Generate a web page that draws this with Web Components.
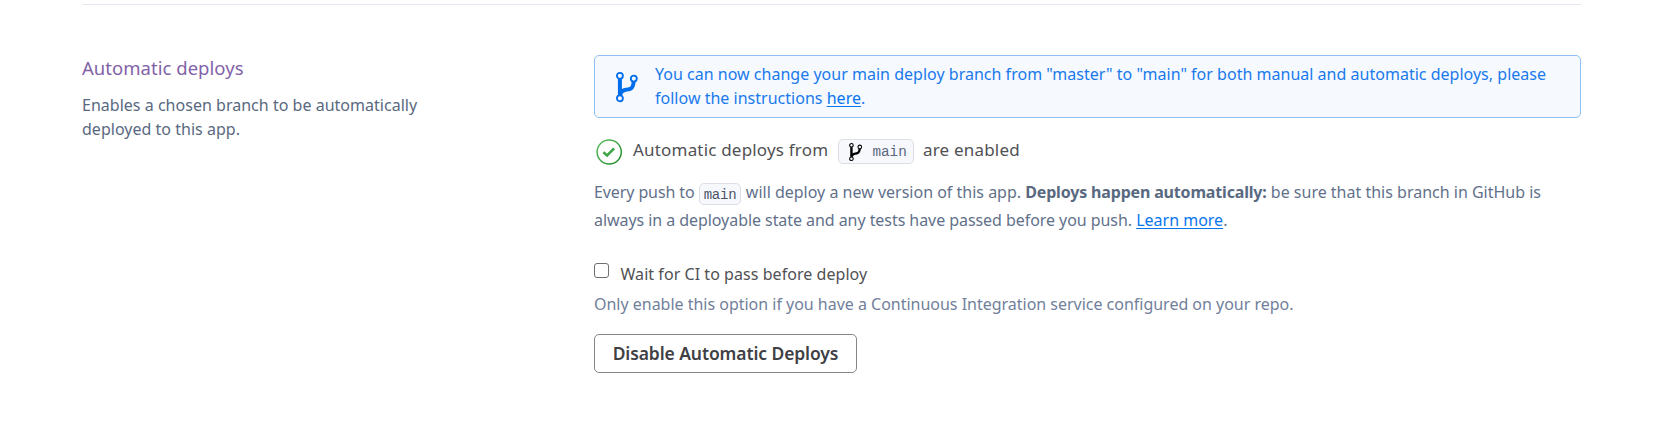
<!DOCTYPE html>
<html lang="en">
<head>
<meta charset="utf-8">
<title>Automatic deploys</title>
<style>
  body { margin: 0; background: #fff; font-family: "Noto Sans", sans-serif; font-size: 16px; line-height: 24px; color: #62718b; }
</style>
</head>
<body>
<deploy-settings></deploy-settings>
<script>
const define = (name, html) => {
  const template = document.createElement('template');
  template.innerHTML = html;
  customElements.define(name, class extends HTMLElement {
    constructor() {
      super();
      this.attachShadow({ mode: 'open' }).append(template.content.cloneNode(true));
    }
  });
};

define('branch-icon', `
  <style>
    :host { display: block; flex: none; width: 22px; height: 30px; }
    svg { display: block; width: 100%; height: 100%; overflow: visible; }
  </style>
  <svg viewBox="0 0 22 30" fill="none" stroke="currentColor">
    <circle cx="3.9" cy="3.8" r="3" stroke-width="1.8"/>
    <circle cx="17.8" cy="6.6" r="3" stroke-width="1.8"/>
    <circle cx="3.9" cy="26.3" r="3" stroke-width="1.8"/>
    <path d="M3.9 6.9V23.2" stroke-width="4"/>
    <path d="M17.6 9.8C17.3 17.6 13.4 17.2 9.8 17.7C6.6 18.2 5 19.6 4.2 22.6" stroke-width="3.9"/>
  </svg>`);

define('check-icon', `
  <style>
    :host { display: block; flex: none; width: 27px; height: 27px; }
    svg { display: block; }
  </style>
  <svg width="27" height="27" viewBox="0 0 27 27" fill="none">
    <defs><linearGradient id="g" x1="0" y1="0" x2="1" y2="1"><stop stop-color="#5dbf63"/><stop offset="1" stop-color="#1f8b27"/></linearGradient></defs>
    <circle cx="13.2" cy="14" r="12.1" stroke="url(#g)" stroke-width="1.5"/>
    <path d="M7.4 14.3L11.1 17.5L18.1 10.4" stroke="#3fa648" stroke-width="2.6"/>
  </svg>`);

define('section-intro', `
  <style>
    :host { display: block; padding-top: 1px; }
    h2 { margin: 0 0 13px; font-size: 18.5px; font-weight: 400; line-height: 24px; letter-spacing: .03px; color: #8262a8; }
    p { margin: 0; color: #596981; letter-spacing: .02px; }
  </style>
  <h2><slot name="title"></slot></h2>
  <p><slot></slot></p>`);

define('text-link', `
  <style>
    :host { display: inline; white-space: nowrap; }
    a { color: #0a76ee; text-decoration: underline; text-decoration-thickness: 1px; text-underline-offset: 2px; }
  </style>
  <a href="#"><slot></slot></a>`);

define('info-banner', `
  <style>
    :host { display: flex; align-items: flex-start; box-sizing: border-box; height: 63px; padding: 6px 21px; border: 1px solid #8fbff5; border-radius: 5px; background: #f6f9fe; color: #1a7aec; letter-spacing: .015px; }
    branch-icon { margin: 10px 17px 0 0; color: #006deb; }
  </style>
  <branch-icon></branch-icon><div><slot></slot></div>`);

define('code-chip', `
  <style>
    :host { display: inline-flex; align-items: center; box-sizing: border-box; height: 22px; padding: 1px 4px 0; border: 1px solid #dcdfe6; border-radius: 5px; background: #f6f8fc; font: 14px/18px "Liberation Mono", monospace; letter-spacing: -.2px; color: #4a5568; white-space: nowrap; }
    :host([large]) { height: 25px; padding: 1px 7px 0 10px; font-size: 14.3px; letter-spacing: 0; color: #5a6780; }
  </style>
  <slot></slot>`);

define('deploy-status', `
  <style>
    :host { display: flex; align-items: center; height: 27px; margin-top: 20px; padding-left: 2px; font-size: 17px; color: #505154; letter-spacing: .19px; white-space: nowrap; }
    .text { padding-bottom: 4px; }
    .from { margin-left: 10px; width: 195px; }
    .enabled { margin-left: 9px; }
    code-chip { width: 76px; margin-left: 10px; }
    branch-icon { width: 13.4px; height: 18px; margin-right: 10px; color: #000; }
  </style>
  <check-icon></check-icon>
  <span class="text from">Automatic deploys from</span>
  <code-chip large><branch-icon></branch-icon>main</code-chip>
  <span class="text enabled">are enabled</span>`);

define('deploy-note', `
  <style>
    :host { display: block; margin-top: 13px; line-height: 28px; white-space: nowrap; }
    .line { height: 28px; }
    .first { display: flex; white-space: pre; }
    strong { font-weight: 700; letter-spacing: -.17px; color: #596981; }
    .a { letter-spacing: -.1px; }
    .b { letter-spacing: -.06px; }
    code-chip { width: 42px; margin: 5px 1px 0 0; }
  </style>
  <div class="line first"><span class="a">Every push to </span><code-chip>main</code-chip><span> will deploy a new version of this app. </span><strong>Deploys happen automatically:</strong><span> be sure that this branch in GitHub is</span></div>
  <div class="line"><span class="b">always in a deployable state and any tests have passed before you push.</span> <text-link>Learn more</text-link>.</div>`);

define('check-option', `
  <style>
    :host { display: block; margin-top: 28px; }
    label { display: flex; color: #505154; letter-spacing: .05px; }
    input { appearance: none; box-sizing: border-box; width: 15px; height: 15px; margin: 1px 11.5px 0 0; border: 1px solid #6f6f72; border-radius: 3px; background: #fff; }
    p { margin: 6px 0 0; color: #71809b; letter-spacing: -.015px; }
  </style>
  <label><input type="checkbox"><slot></slot></label>
  <p><slot name="hint"></slot></p>`);

define('outline-button', `
  <style>
    :host { display: block; margin-top: 18px; }
    button { display: block; box-sizing: border-box; width: 263px; height: 39px; padding: 0 0 1px; border: 1px solid #85868a; border-radius: 5px; background: #fff; color: #3f4045; font: 600 17.5px/24px "Noto Sans", sans-serif; letter-spacing: -.1px; white-space: nowrap; }
  </style>
  <button type="button"><slot></slot></button>`);

define('deploy-settings', `
  <style>
    :host { display: block; margin: 4px 81px 0 82px; border-top: 1px solid #e3e8f1; padding-top: 50px; }
    .grid { display: grid; grid-template-columns: 400px 987px; column-gap: 112px; }
  </style>
  <div class="grid">
    <section-intro><span slot="title">Automatic deploys</span>Enables a chosen branch to be automatically<br>deployed to this app.</section-intro>
    <main>
      <info-banner>You can now change your main deploy branch from "master" to "main" for both manual and automatic deploys, please<br>follow the instructions <text-link>here</text-link>.</info-banner>
      <deploy-status></deploy-status>
      <deploy-note></deploy-note>
      <check-option>Wait for CI to pass before deploy<span slot="hint">Only enable this option if you have a Continuous Integration service configured on your repo.</span></check-option>
      <outline-button>Disable Automatic Deploys</outline-button>
    </main>
  </div>`);
</script>
</body>
</html>
